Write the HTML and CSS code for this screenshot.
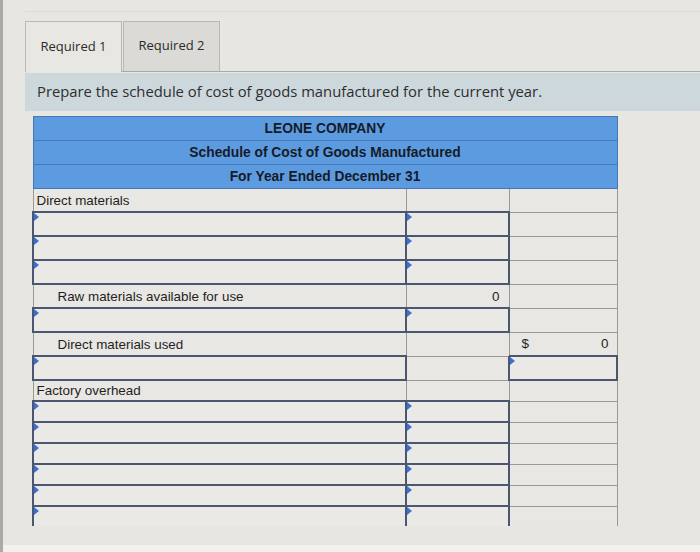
FILE: index.html
```html
<!DOCTYPE html>
<html>
<head>
<meta charset="utf-8">
<link rel="stylesheet" href="styles.css">
</head>
<body>
<div class="page">
  <div class="topline"></div>
  <div class="tabs">
    <div class="tab active">Required 1</div>
    <div class="tab">Required 2</div>
  </div>
  <div class="instr">Prepare the schedule of cost of goods manufactured for the current year.</div>
  <table class="sched">
    <colgroup><col class="c1"><col class="c2"><col class="c3"></colgroup>
    <tr class="hd"><td colspan="3">LEONE COMPANY</td></tr>
    <tr class="hd"><td colspan="3">Schedule of Cost of Goods Manufactured</td></tr>
    <tr class="hd"><td colspan="3">For Year Ended December 31</td></tr>
    <tr><td class="lbl">Direct materials</td><td></td><td></td></tr>
    <tr><td class="inp"></td><td class="inp"></td><td></td></tr>
    <tr><td class="inp"></td><td class="inp"></td><td></td></tr>
    <tr><td class="inp"></td><td class="inp"></td><td></td></tr>
    <tr><td class="lbl ind">Raw materials available for use</td><td class="num">0</td><td></td></tr>
    <tr><td class="inp"></td><td class="inp"></td><td></td></tr>
    <tr><td class="lbl ind">Direct materials used</td><td></td><td class="num dol"><span>$</span><span>0</span></td></tr>
    <tr><td class="inp"></td><td></td><td class="inp"></td></tr>
    <tr class="sm"><td class="lbl">Factory overhead</td><td></td><td></td></tr>
    <tr class="sm"><td class="inp"></td><td class="inp"></td><td></td></tr>
    <tr class="sm"><td class="inp"></td><td class="inp"></td><td></td></tr>
    <tr class="sm"><td class="inp"></td><td class="inp"></td><td></td></tr>
    <tr class="sm"><td class="inp"></td><td class="inp"></td><td></td></tr>
    <tr class="sm"><td class="inp"></td><td class="inp"></td><td></td></tr>
    <tr class="sm last"><td class="inp"></td><td class="inp"></td><td></td></tr>
  </table>
</div>
</body>
</html>
```

FILE: styles.css
```css
html {
  height: 552px;
  background: linear-gradient(to bottom, #e8e6e1 0, #e8e6e1 545px, #f2f1ee 545px);
}
body {
  margin: 0;
  height: 552px;
  overflow: hidden;
  border-left: 3px solid #aaa9a6;
  box-sizing: border-box;
}
.page {
  padding-left: 22px;
}
.topline {
  height: 11px;
  border-bottom: 1px solid #dddbd6;
}
.tabs {
  display: flex;
  align-items: flex-end;
  margin-top: 7px;
  border-bottom: 1px solid #a9a8a5;
  height: 52px;
}
.tab {
  font-family: "Open Sans", sans-serif;
  font-size: 13px;
  color: #2a2a2a;
  width: 97px;
  height: 50px;
  box-sizing: border-box;
  border: 1px solid #b9b8b4;
  border-bottom: none;
  display: flex;
  align-items: center;
  justify-content: center;
  background: #dcdad6;
  margin-right: 1px;
  padding-bottom: 3px;
}
.tab.active {
  background: #e9e7e2;
  height: 51px;
  margin-bottom: -1px;
  padding-top: 0;
  padding-bottom: 2px;
}
.instr {
  margin-top: 1px;
  height: 38px;
  background: #cdd8dd;
  font-family: "Open Sans", sans-serif;
  font-size: 14.8px;
  color: #2e2e2e;
  padding-left: 12px;
  padding-bottom: 2px;
  box-sizing: border-box;
  display: flex;
  align-items: center;
}
.sched {
  margin-top: 5px;
  margin-left: 7px;
  border-collapse: collapse;
  width: 584px;
  table-layout: fixed;
  font-family: "Liberation Sans", Arial, sans-serif;
  font-size: 13.4px;
  color: #1f1f1f;
}
.c1 { width: 373px; }
.c2 { width: 103px; }
.c3 { width: 108px; }
.sched td {
  height: 22px;
  padding: 0 4px;
  border: 1px solid #9a9995;
  background: #e9e7e3;
  position: relative;
}
.sched tr.sm td {
  height: 19px;
}
.sched .hd td {
  background: #5d9be0;
  border: 1px solid #4477b8;
  text-align: center;
  font-weight: bold;
  font-size: 13.8px;
  color: #151b28;
  height: 23px;
}
.sched td.lbl {
  padding-left: 3px;
}
.sched td.ind {
  padding-left: 24px;
}
.sched td.num {
  text-align: right;
  padding-right: 9px;
}
.sched td.dol {
  padding-left: 12px;
  padding-right: 8px;
}
.dol span:first-child {
  float: left;
}
.sched td.inp {
  border: 2px solid #4b5670;
  background: #ebe9e5;
}
.sched td.inp::before {
  content: "";
  position: absolute;
  left: 0;
  top: 0;
  border-top: 4px solid transparent;
  border-bottom: 4px solid transparent;
  border-left: 5px solid #3a6fd8;
}
.sched tr.last td {
  border-bottom: none;
}
```
